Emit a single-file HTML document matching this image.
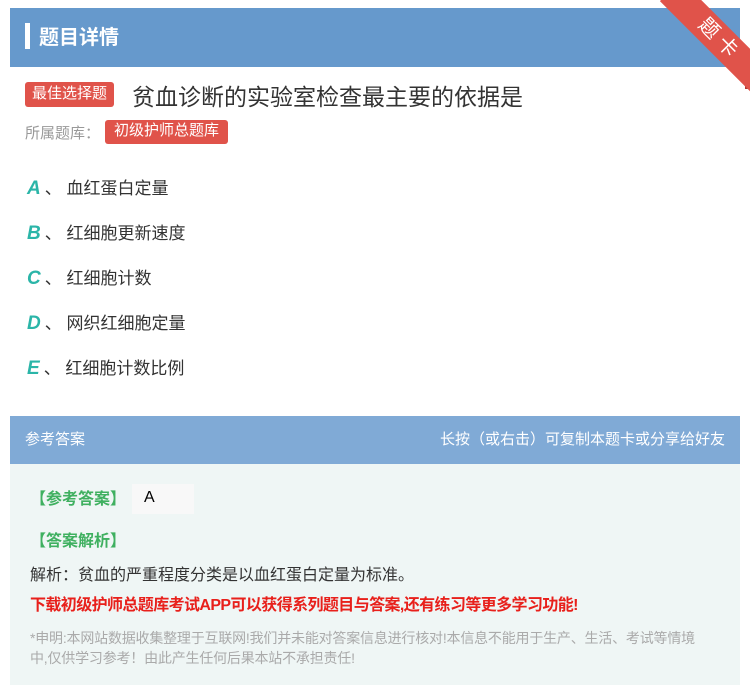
<!DOCTYPE html><html><head><meta charset="utf-8"><style>
body{margin:0;width:750px;height:685px;background:#fff;font-family:"Liberation Sans","Noto Sans CJK SC",sans-serif;position:relative;overflow:hidden}
.a{position:absolute;white-space:nowrap}
.tag{background:#e0534a;color:#fff;border-radius:3px}
.opt{position:absolute;left:27px;font-size:17px;color:#333}
.opt b{color:#2bb5a8;font-style:italic;font-size:19px;margin-right:4px}
</style></head><body>
<div class="a" style="left:10px;top:8px;width:730px;height:59px;background:#6699cc"></div>
<div class="a" style="left:25px;top:23px;width:5px;height:26px;background:#fff"></div>
<div class="a" style="left:39px;top:21px;font-size:20px;color:#fff;font-weight:bold">题目详情</div>
<div class="a" style="left:745px;top:75px;width:8px;height:14px;background:#b03a33"></div>
<div class="a" style="left:650px;top:25px;width:140px;height:30px;background:#e0534a;transform:rotate(45deg);text-align:center;line-height:30px;color:#fff;font-size:20px;letter-spacing:6px">题卡</div>
<div class="a tag" style="left:25px;top:82px;height:25px;line-height:24px;padding:0 7px;font-size:15px">最佳选择题</div>
<div class="a" style="left:132px;top:78px;font-size:23px;color:#333">贫血诊断的实验室检查最主要的依据是</div>
<div class="a" style="left:25px;top:122px;font-size:15px;color:#999">所属题库：</div>
<div class="a tag" style="left:105px;top:120px;height:24px;line-height:22px;padding:0 9px;font-size:15px">初级护师总题库</div>
<div class="opt" style="top:174px"><b>A</b>、 血红蛋白定量</div>
<div class="opt" style="top:219px"><b>B</b>、 红细胞更新速度</div>
<div class="opt" style="top:264px"><b>C</b>、 红细胞计数</div>
<div class="opt" style="top:309px"><b>D</b>、 网织红细胞定量</div>
<div class="opt" style="top:354px"><b>E</b>、 红细胞计数比例</div>
<div class="a" style="left:10px;top:416px;width:730px;height:48px;background:#80aad6"></div>
<div class="a" style="left:25px;top:428px;font-size:15px;color:#fff">参考答案</div>
<div class="a" style="right:25px;top:428px;font-size:15px;color:#fff">长按（或右击）可复制本题卡或分享给好友</div>
<div class="a" style="left:10px;top:464px;width:730px;height:221px;background:#eff6f5"></div>
<div class="a" style="left:30px;top:485px;font-size:16px;color:#3fb060;font-weight:bold">【参考答案】</div>
<div class="a" style="left:132px;top:484px;width:62px;height:30px;background:#f8f8f8;font-size:16px;line-height:28px;padding-left:12px;box-sizing:border-box">A</div>
<div class="a" style="left:30px;top:527px;font-size:16px;color:#3fb060;font-weight:bold">【答案解析】</div>
<div class="a" style="left:30px;top:561px;font-size:16px;color:#333">解析：贫血的严重程度分类是以血红蛋白定量为标准。</div>
<div class="a" style="left:30px;top:591px;font-size:16px;color:#e8201b;font-weight:bold;letter-spacing:-0.6px">下载初级护师总题库考试APP可以获得系列题目与答案,还有练习等更多学习功能!</div>
<div class="a" style="left:30px;top:628px;font-size:14px;color:#aaa;line-height:20px;letter-spacing:-0.2px">*申明:本网站数据收集整理于互联网!我们并未能对答案信息进行核对!本信息不能用于生产、生活、考试等情境<br>中,仅供学习参考！由此产生任何后果本站不承担责任!</div>
</body></html>
